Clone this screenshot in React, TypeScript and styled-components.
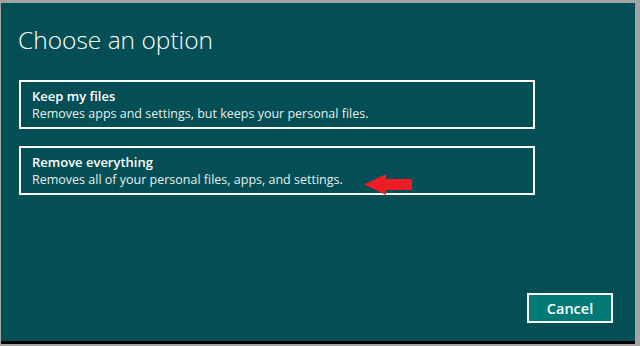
import styled, { createGlobalStyle } from "styled-components";

const GlobalStyle = createGlobalStyle`
  html, body {
    margin: 0;
    padding: 0;
    background: #a3a3a3;
  }
  body {
    font-family: "Open Sans", "Noto Sans", sans-serif;
  }
`;

export default function App() {
  return (
    <>
      <GlobalStyle />
      <Frame>
        <Panel>
          <Title>Choose an option</Title>
          <Options>
            <Option>
              <OptionTitle>Keep my files</OptionTitle>
              <OptionText>Removes apps and settings, but keeps your personal files.</OptionText>
            </Option>
            <Option>
              <OptionTitle>Remove everything</OptionTitle>
              <OptionText>Removes all of your personal files, apps, and settings.</OptionText>
              <Arrow width="48" height="21" viewBox="0 0 48 21">
                <polygon points="0,10.5 22,0 22,5 48,5 48,16 22,16 22,21" fill="#ee1c25" />
              </Arrow>
            </Option>
          </Options>
          <Footer>
            <CancelButton>Cancel</CancelButton>
          </Footer>
        </Panel>
      </Frame>
    </>
  );
}

const Frame = styled.div`
  width: 640px;
  height: 346px;
  box-sizing: border-box;
  padding: 3px 5px 2px 1px;
  background: #a3a3a3;
`;

const Panel = styled.div`
  height: 100%;
  box-sizing: border-box;
  background: #034f55;
  border-bottom: 3px solid #000;
  display: flex;
  flex-direction: column;
  padding: 20px 0 0 17px;
  color: #fff;
`;

const Title = styled.h1`
  margin: 0;
  font-weight: 300;
  font-size: 24.5px;
  line-height: 34px;
`;

const Options = styled.div`
  display: flex;
  flex-direction: column;
  gap: 17px;
  margin-top: 23px;
  margin-left: 1px;
`;

const Option = styled.div`
  position: relative;
  width: 516px;
  height: 49px;
  box-sizing: border-box;
  border: 2px solid #fff;
  padding: 6px 0 0 11px;
`;

const OptionTitle = styled.div`
  font-weight: 600;
  font-size: 13px;
  line-height: 17px;
`;

const OptionText = styled.div`
  font-weight: 400;
  font-size: 12.5px;
  line-height: 17px;
  color: #e4eeee;
`;

const Arrow = styled.svg`
  position: absolute;
  left: 343px;
  top: 26px;
`;

const Footer = styled.div`
  margin-top: auto;
  display: flex;
  justify-content: flex-end;
  padding: 0 22px 18px 0;
`;

const CancelButton = styled.button`
  width: 86px;
  height: 30px;
  box-sizing: border-box;
  border: 2px solid #fff;
  background: #037a75;
  color: #fff;
  font-family: "Open Sans", "Noto Sans", sans-serif;
  font-weight: 600;
  font-size: 14.5px;
  padding: 0;
`;
